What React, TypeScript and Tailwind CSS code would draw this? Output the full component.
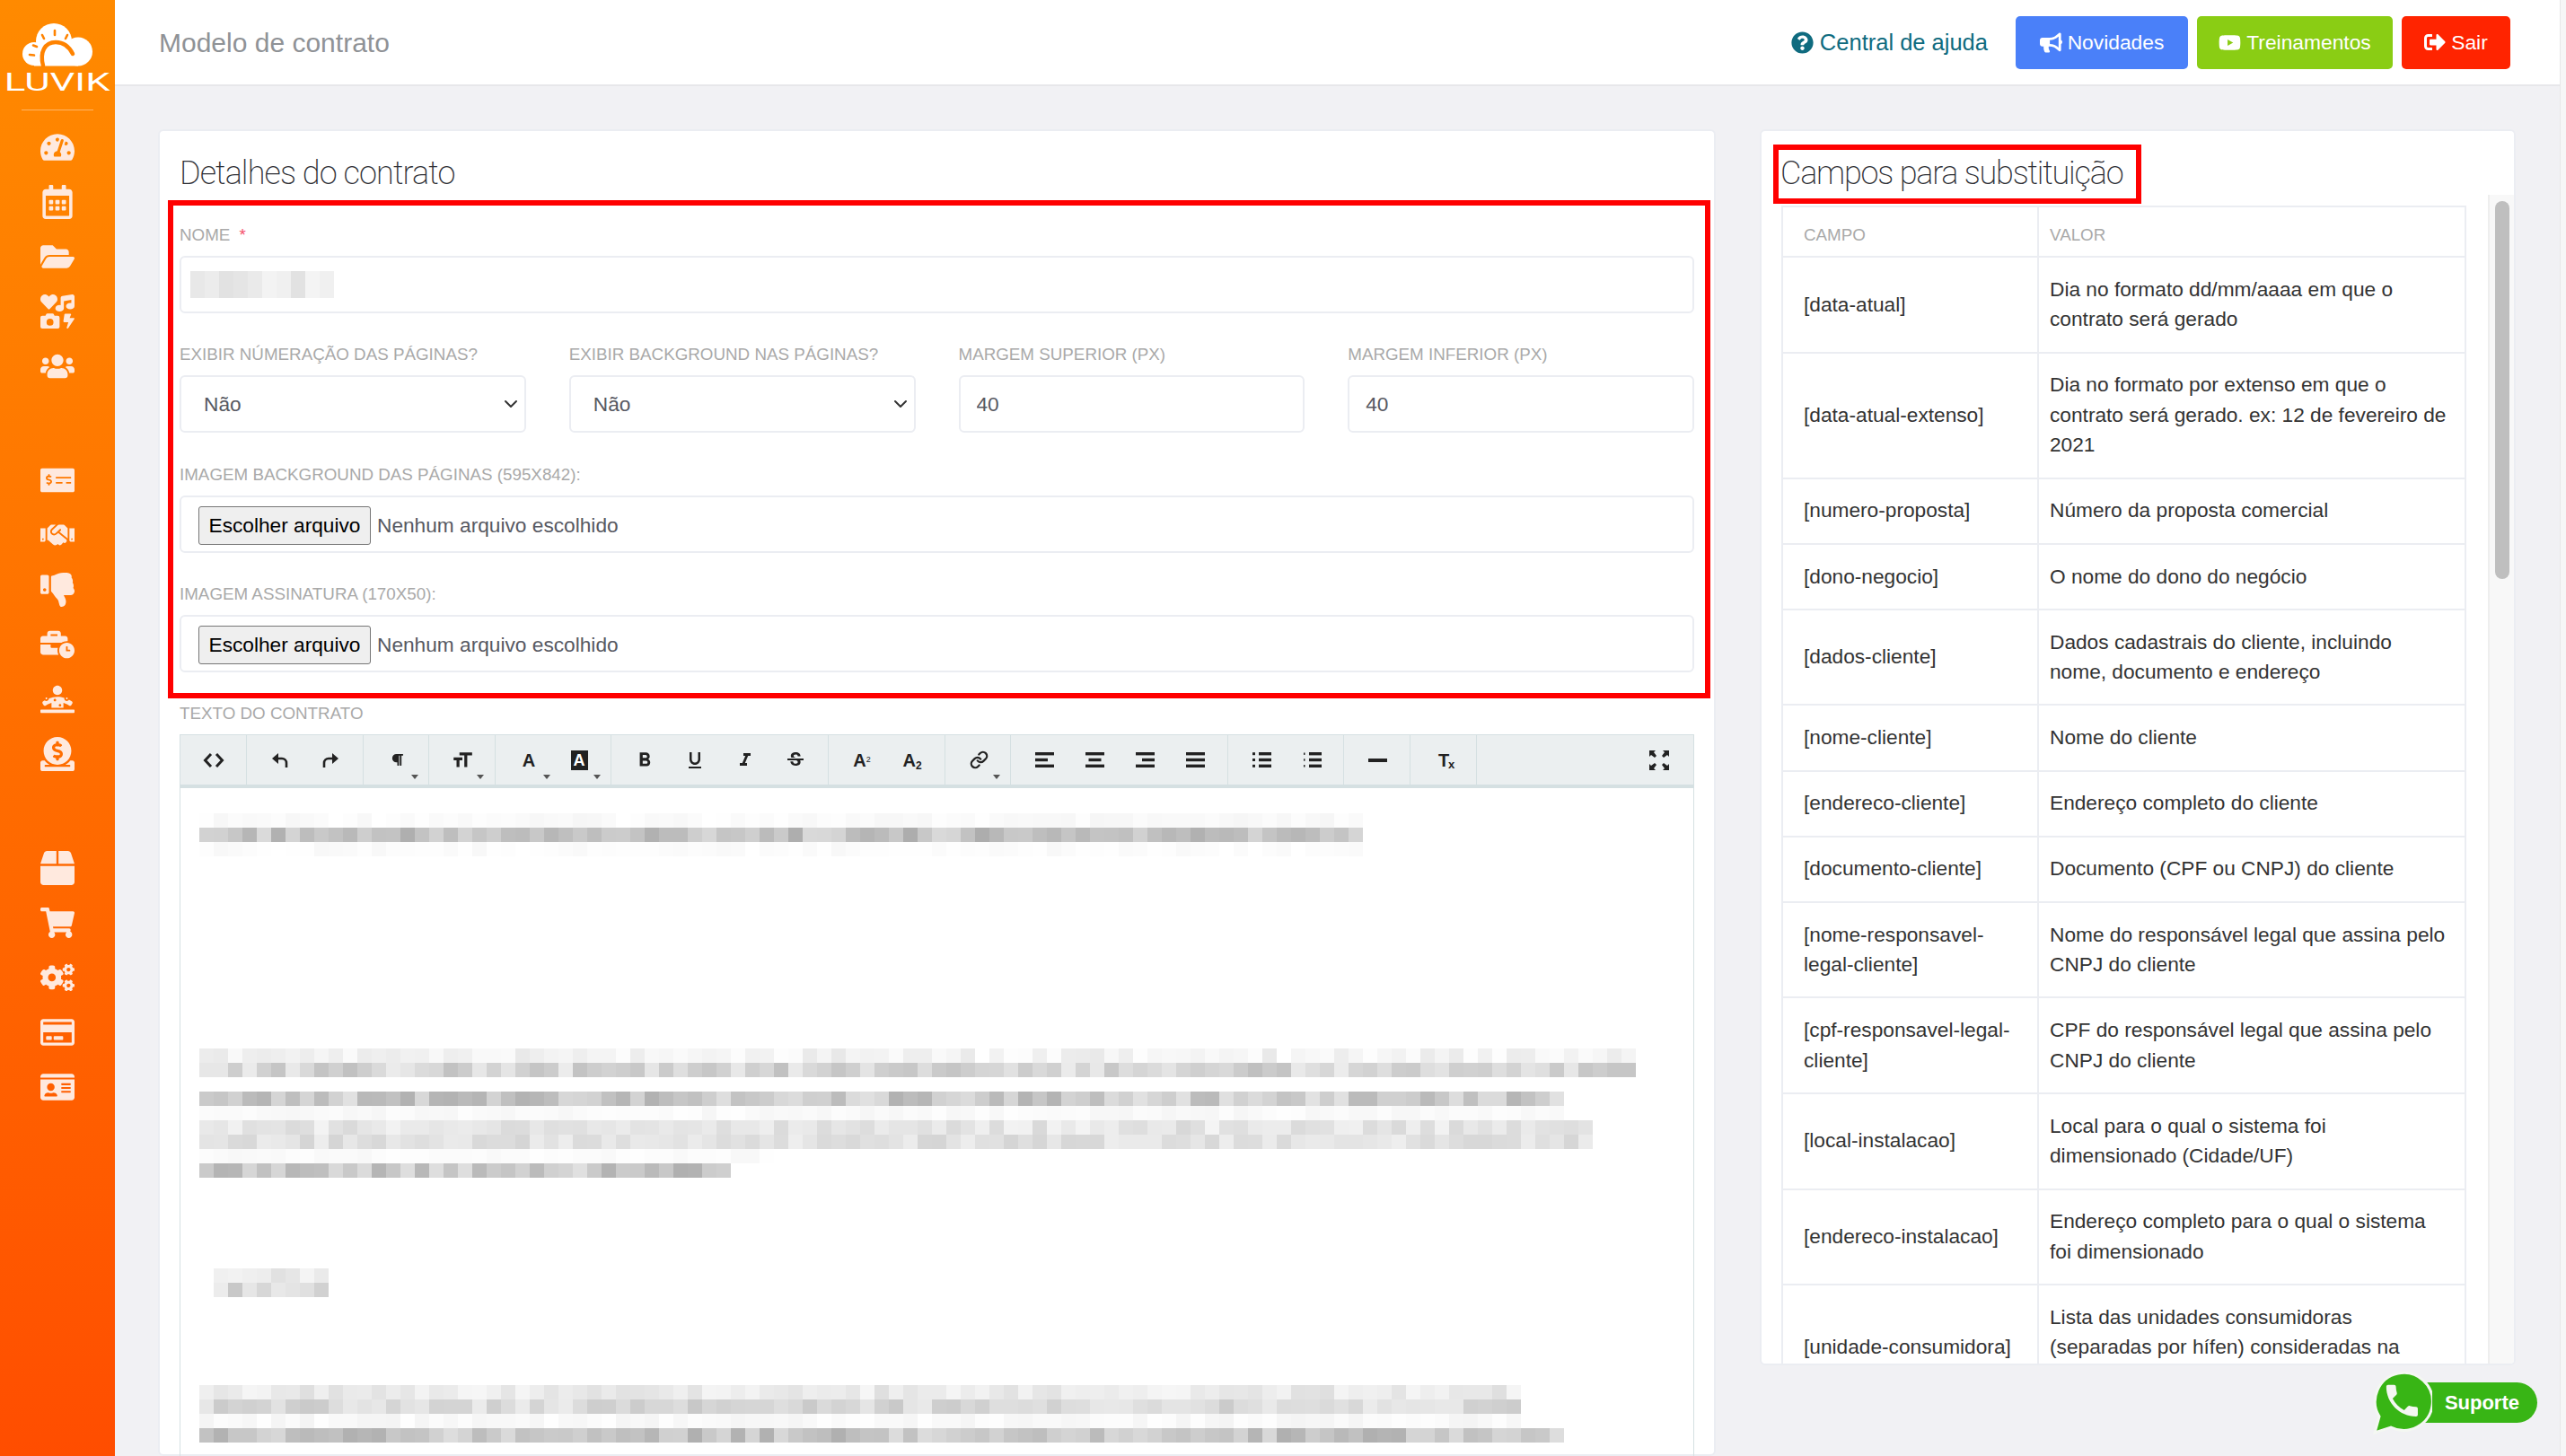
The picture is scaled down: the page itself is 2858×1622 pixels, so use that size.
import { ChevronDown, Link as LinkIcon } from 'lucide-react'
import {
  FaTachometerAlt, FaRegCalendarAlt, FaFolderOpen, FaIcons, FaUsers, FaMoneyCheckAlt, FaHandshake, FaThumbsDown,
  FaBusinessTime, FaDiagnoses, FaDonate, FaBox, FaShoppingCart, FaCogs, FaRegCreditCard, FaIdCard,
  FaQuestionCircle, FaBullhorn, FaYoutube, FaSignOutAlt, FaParagraph,
} from 'react-icons/fa'
import { MdFormatSize, MdFormatBold, MdFormatUnderlined, MdFormatItalic, MdStrikethroughS } from 'react-icons/md'

const sideGroups = [
  [FaTachometerAlt, FaRegCalendarAlt, FaFolderOpen, FaIcons, FaUsers],
  [FaMoneyCheckAlt, FaHandshake, FaThumbsDown, FaBusinessTime, FaDiagnoses, FaDonate],
  [FaBox, FaShoppingCart, FaCogs, FaRegCreditCard, FaIdCard],
]

const campos = [
  { campo: '[data-atual]', valor: 'Dia no formato dd/mm/aaaa em que o contrato será gerado' },
  { campo: '[data-atual-extenso]', valor: 'Dia no formato por extenso em que o contrato será gerado. ex: 12 de fevereiro de 2021' },
  { campo: '[numero-proposta]', valor: 'Número da proposta comercial' },
  { campo: '[dono-negocio]', valor: 'O nome do dono do negócio' },
  { campo: '[dados-cliente]', valor: 'Dados cadastrais do cliente, incluindo nome, documento e endereço' },
  { campo: '[nome-cliente]', valor: 'Nome do cliente' },
  { campo: '[endereco-cliente]', valor: 'Endereço completo do cliente' },
  { campo: '[documento-cliente]', valor: 'Documento (CPF ou CNPJ) do cliente' },
  { campo: '[nome-responsavel-legal-cliente]', valor: 'Nome do responsável legal que assina pelo CNPJ do cliente' },
  { campo: '[cpf-responsavel-legal-cliente]', valor: 'CPF do responsável legal que assina pelo CNPJ do cliente' },
  { campo: '[local-instalacao]', valor: 'Local para o qual o sistema foi dimensionado (Cidade/UF)' },
  { campo: '[endereco-instalacao]', valor: 'Endereço completo para o qual o sistema foi dimensionado' },
  { campo: '[unidade-consumidora]', valor: 'Lista das unidades consumidoras (separadas por hífen) consideradas na proposta' },
]

// blurred contract text: [cols, darkest grey, lightest grey]
const mosaic = [
  { mt: 28, offset: 0, rows: [[81, 246, 255], [81, 172, 218], [81, 248, 255]] },
  { mt: 214, offset: 0, rows: [[100, 232, 255], [100, 192, 236], [0, 255, 255], [95, 178, 226], [95, 246, 254], [97, 216, 244], [97, 212, 240], [40, 248, 254], [37, 176, 224]] },
  { mt: 101, offset: 1, rows: [[8, 224, 244], [8, 200, 236]] },
  { mt: 98, offset: 0, rows: [[92, 222, 246], [92, 200, 236], [92, 244, 254], [95, 176, 222]] },
]

function grey(seed: number, lo: number, hi: number) {
  const x = Math.sin(seed * 12.9898) * 43758.5453
  const v = Math.round(lo + (x - Math.floor(x)) * (hi - lo))
  return `rgb(${v},${v},${v})`
}

function Mosaic() {
  return (
    <div className="pl-[21px]">
      {mosaic.map((block, b) => (
        <div key={b} style={{ marginTop: block.mt, paddingLeft: block.offset * 16 }}>
          {block.rows.map(([cols, lo, hi], r) => (
            <div key={r} className="flex h-[16px]">
              {Array.from({ length: cols }).map((_, c) => (
                <div key={c} className="w-[16px] h-[16px]" style={{ background: grey(b * 1000 + r * 211 + c + 1, lo, hi) }} />
              ))}
            </div>
          ))}
        </div>
      ))}
    </div>
  )
}

function Logo() {
  return (
    <div className="h-[123px] relative flex flex-col items-center pt-[10px]">
      <svg width="128" height="70" viewBox="0 0 128 70" className="shrink-0">
        <circle cx="60" cy="36" r="20" fill="#fff" />
        <circle cx="38" cy="50" r="13" fill="#fff" />
        <circle cx="87" cy="47.500" r="16" fill="#fff" />
        <rect x="38" y="44" width="49" height="19.500" fill="#fff" />
        <path d="M48 63C44 48 50 37 62 37c8 0 15 5 19 13" fill="none" stroke="#ff8300" strokeWidth="4.500" strokeLinecap="round" />
        <g stroke="#ff8300" strokeWidth="2.600" strokeLinecap="round">
          <path d="M37 40.500l4 1.500" />
          <path d="M47 29l2 4" />
          <path d="M61 24v5" />
          <path d="M75 29l-2 4" />
          <path d="M33 51l5 .5" />
        </g>
      </svg>
      <div className="mt-[1px] text-white font-normal text-[28px] leading-[22px] scale-x-[1.56] font-['Roboto',sans-serif]">LUVIK</div>
      <div className="absolute left-[24px] right-[24px] bottom-0 h-px bg-white/40" />
    </div>
  )
}

function Sidebar() {
  return (
    <div className="w-[128px] shrink-0 h-full bg-gradient-to-b from-[#ff8a00] to-[#ff4d00]">
      <Logo />
      <div className="pt-[10px] flex flex-col gap-[66px]">
        {sideGroups.map((group, g) => (
          <div key={g}>
            {group.map((Icon, i) => (
              <div key={i} className="h-[61px] flex items-center justify-center text-[#ffe9de]">
                <Icon size={38} />
              </div>
            ))}
          </div>
        ))}
      </div>
    </div>
  )
}

function Header() {
  const btn = 'h-[59px] rounded-[5px] flex items-center justify-center gap-[6px] text-white text-[22.800px]'
  return (
    <div className="h-[96px] shrink-0 bg-white border-b-2 border-[#e7e7ea] flex items-center pl-[49px] pr-[55px]">
      <div className="text-[30px] text-[#8f9296]">Modelo de contrato</div>
      <div className="ml-auto flex items-center">
        <FaQuestionCircle size={25} className="text-[#0f6b7f]" />
        <span className="ml-[7px] text-[25.500px] text-[#0f6b7f] mr-[31px]">Central de ajuda</span>
        <div className={`${btn} w-[192px] bg-[#4a80f9]`}><FaBullhorn size={25} />Novidades</div>
        <div className={`${btn} w-[218px] ml-[10px] bg-[#8acd14]`}><FaYoutube size={25} />Treinamentos</div>
        <div className={`${btn} w-[121px] ml-[10px] bg-[#ff2400]`}><FaSignOutAlt size={24} />Sair</div>
      </div>
    </div>
  )
}

function Label({ children }: { children: React.ReactNode }) {
  return <div className="text-[18.800px] leading-[24px] text-[#a9a9a9] uppercase whitespace-nowrap">{children}</div>
}

const fieldClass = 'w-full h-[64px] border-2 border-[#ebedf2] rounded-[6px] bg-white text-[22.700px] text-[#575962] outline-none'
const headingClass = "h-[81px] pt-[25px] text-[36px] leading-[44px] font-extralight text-[#2f3036] font-['Roboto',sans-serif]"

function SelectField({ label }: { label: string }) {
  return (
    <div className="min-w-0">
      <Label>{label}</Label>
      <div className="relative mt-[11px]">
        <select className={`${fieldClass} appearance-none pl-[25px]`} defaultValue="nao">
          <option value="nao">Não</option>
          <option value="sim">Sim</option>
        </select>
        <ChevronDown size={24} strokeWidth={2} className="absolute right-[5px] top-[20px] text-[#333]" />
      </div>
    </div>
  )
}

function TextField({ label, value }: { label: string; value: string }) {
  return (
    <div className="min-w-0">
      <Label>{label}</Label>
      <input className={`${fieldClass} mt-[11px] pl-[18px]`} defaultValue={value} readOnly />
    </div>
  )
}

function FileField({ label }: { label: string }) {
  return (
    <div>
      <Label>{label}</Label>
      <div className={`${fieldClass} mt-[11px] flex items-center pl-[19px] pt-[3px] text-[#333]`}>
        <button className="h-[43px] w-[192px] bg-[#efefef] border border-[#767676] rounded-[3px] text-[22.700px] text-black">Escolher arquivo</button>
        <span className="ml-[7px]">Nenhum arquivo escolhido</span>
      </div>
    </div>
  )
}

function Caret() {
  return <span className="absolute right-[4px] bottom-[6px] w-0 h-0 border-l-[4px] border-r-[4px] border-t-[5px] border-l-transparent border-r-transparent border-t-[#555]" />
}

function Tool({ children, caret }: { children: React.ReactNode; caret?: boolean }) {
  return (
    <div className="relative w-[56px] h-full flex items-center justify-center text-[#222]">
      {children}
      {caret && <Caret />}
    </div>
  )
}

function Group({ children, narrow }: { children: React.ReactNode; narrow?: boolean }) {
  return <div className={`h-full flex pl-[9px] border-r border-[#d5e0e2] ${narrow ? 'pr-[7px]' : 'pr-[8px]'}`}>{children}</div>
}

function AlignIcon({ mid, w }: { mid: number; w: number }) {
  return (
    <svg width="21" height="17" viewBox="0 0 21 17" fill="#222">
      <rect width="21" height="3.400" />
      <rect x={mid} y="6.800" width={w} height="3.400" />
      <rect y="13.600" width="21" height="3.400" />
    </svg>
  )
}

function ListIcon({ small }: { small?: boolean }) {
  const s = small ? 1.5 : 3
  return (
    <svg width="21" height="17" viewBox="0 0 21 17" fill="#222">
      {[0, 6.8, 13.6].map((y) => (
        <g key={y}>
          <rect x={small ? 1 : 0} y={y + (small ? 0.5 : 0.2)} width={s} height={small ? 2.4 : 3} />
          <rect x="7" y={y} width="14" height="3.400" />
        </g>
      ))}
    </svg>
  )
}

function Toolbar() {
  const letter = "font-['Liberation_Sans',sans-serif] font-bold text-[#222]"
  return (
    <div className="h-[60px] bg-[#ebeff0] border border-[#d5e0e2] border-b-[4px] flex items-stretch">
      <Group>
        <Tool>
          <svg width="24" height="20" viewBox="0 0 24 20" fill="none" stroke="#222" strokeWidth="3"><path d="M9 3L2.500 10L9 17" /><path d="M15 3l6.500 7L15 17" /></svg>
        </Tool>
      </Group>
      <Group>
        <Tool>
          <svg width="20" height="18" viewBox="0 0 20 18"><path d="M8 1L1 7l7 6z" fill="#222" /><path d="M6 7h6a5 5 0 0 1 5 5v5" fill="none" stroke="#222" strokeWidth="2.600" /></svg>
        </Tool>
        <Tool>
          <svg width="20" height="18" viewBox="0 0 20 18"><path d="M12 1l7 6-7 6z" fill="#222" /><path d="M14 7H8a5 5 0 0 0-5 5v5" fill="none" stroke="#222" strokeWidth="2.600" /></svg>
        </Tool>
      </Group>
      <Group narrow><Tool caret><FaParagraph size={15} /></Tool></Group>
      <Group><Tool caret><MdFormatSize size={26} /></Tool></Group>
      <Group narrow>
        <Tool caret><span className={`${letter} text-[20px]`}>A</span></Tool>
        <Tool caret><span className={`${letter} text-[18px] leading-[22px] bg-[#222] !text-white px-[3px]`}>A</span></Tool>
      </Group>
      <Group>
        <Tool><MdFormatBold size={26} /></Tool>
        <Tool><MdFormatUnderlined size={24} /></Tool>
        <Tool><MdFormatItalic size={24} /></Tool>
        <Tool><MdStrikethroughS size={24} /></Tool>
      </Group>
      <Group>
        <Tool><span className={`${letter} text-[20px]`}>A<sup className="text-[9px] font-normal">2</sup></span></Tool>
        <Tool><span className={`${letter} text-[20px]`}>A<sub className="text-[12px]">2</sub></span></Tool>
      </Group>
      <Group narrow><Tool caret><LinkIcon size={21} strokeWidth={2.6} /></Tool></Group>
      <Group>
        <Tool><AlignIcon mid={0} w={14} /></Tool>
        <Tool><AlignIcon mid={3.5} w={14} /></Tool>
        <Tool><AlignIcon mid={7} w={14} /></Tool>
        <Tool><AlignIcon mid={0} w={21} /></Tool>
      </Group>
      <Group narrow>
        <Tool><ListIcon /></Tool>
        <Tool><ListIcon small /></Tool>
      </Group>
      <Group><Tool><div className="w-[21px] h-[4px] bg-[#222]" /></Tool></Group>
      <Group>
        <Tool>
          <span className={`${letter} text-[20px] relative`}>T<span className="text-[13px] absolute left-[11px] top-[10px]">x</span></span>
        </Tool>
      </Group>
      <div className="ml-auto w-[76px] flex items-center justify-center">
        <svg width="22" height="22" viewBox="0 0 22 22" fill="#222">
          <path d="M0 0h7L5 2l3 4-2 2-4-3-2 2z" />
          <path d="M22 0h-7l2 2-3 4 2 2 4-3 2 2z" />
          <path d="M0 22h7l-2-2 3-4-2-2-4 3-2-2z" />
          <path d="M22 22h-7l2-2-3-4 2-2 4 3 2-2z" />
        </svg>
      </div>
    </div>
  )
}

function DetailsCard() {
  return (
    <div className="relative w-[1735px] h-[1478px] shrink-0 bg-white border-2 border-[#ebedf2] rounded-[6px] px-[22px]">
      <div className={`${headingClass} tracking-[-0.9px]`}>Detalhes do contrato</div>
      <div className="pt-[23px]">
        <Label>Nome <span className="text-[#f4516c] ml-[5px]">*</span></Label>
        <div className={`${fieldClass} mt-[11px] flex items-center pl-[10px]`}>
          <div className="grid grid-cols-[repeat(10,16px)] grid-rows-[repeat(2,15px)]">
            {Array.from({ length: 20 }).map((_, i) => (
              <div key={i} style={{ background: grey((i % 10) + 5, 222, 244) }} />
            ))}
          </div>
        </div>
      </div>
      <div className="grid grid-cols-4 gap-x-[48px] mt-[34px]">
        <SelectField label="Exibir númeração das páginas?" />
        <SelectField label="Exibir background nas páginas?" />
        <TextField label="Margem superior (px)" value="40" />
        <TextField label="Margem inferior (px)" value="40" />
      </div>
      <div className="mt-[35px]"><FileField label="Imagem background das páginas (595x842):" /></div>
      <div className="mt-[34px]"><FileField label="Imagem assinatura (170x50):" /></div>
      <div className="mt-[34px]">
        <Label>Texto do contrato</Label>
        <div className="mt-[11px]">
          <Toolbar />
          <div className="h-[800px] border-x border-[#d5e0e2] overflow-hidden">
            <Mosaic />
          </div>
        </div>
      </div>
      <div className="absolute left-[9px] top-[77px] w-[1718px] h-[555px] border-[6px] border-[#ff0000] pointer-events-none" />
    </div>
  )
}

function CamposCard() {
  return (
    <div className="relative w-[842px] h-[1377px] shrink-0 bg-white border-2 border-[#ebedf2] rounded-[6px] overflow-hidden">
      <div className={`${headingClass} h-[83px] pl-[21px] tracking-[-1.2px]`}>Campos para substituição</div>
      <div className="absolute right-0 top-[71px] bottom-0 w-[29px] bg-[#f8f8f8] border-l-2 border-[#eeeeee]">
        <div className="absolute left-[6px] top-[7px] w-[16px] h-[421px] rounded-full bg-[#bfbfbf]" />
      </div>
      <table className="ml-[22px] w-[763px] table-fixed border-collapse text-[22.700px] leading-[33.500px] text-[#333]">
        <colgroup>
          <col className="w-[285px]" />
          <col />
        </colgroup>
        <thead>
          <tr className="h-[56px] text-[18.800px] text-[#a9a9a9] text-left">
            <th className="font-normal border-2 border-[#ebedf2] pl-[23px] pt-[8px]">CAMPO</th>
            <th className="font-normal border-2 border-[#ebedf2] pl-[12px] pt-[8px]">VALOR</th>
          </tr>
        </thead>
        <tbody>
          {campos.map((row) => (
            <tr key={row.campo}>
              <td className="border-2 border-[#ebedf2] pl-[23px] pr-[14px] py-[18.800px] break-words">{row.campo}</td>
              <td className="border-2 border-[#ebedf2] pl-[12px] pr-[14px] py-[18.800px]">{row.valor}</td>
            </tr>
          ))}
        </tbody>
      </table>
    </div>
  )
}

function Suporte() {
  return (
    <div className="absolute left-[2641px] top-[1528px] w-[187px] h-[70px]">
      <div className="absolute left-[20px] top-[12px] right-[2px] h-[45px] rounded-full bg-[#38b515] flex items-center justify-end pr-[20px]">
        <span className="text-white text-[22px] font-bold">Suporte</span>
      </div>
      <svg className="absolute left-0 top-0" width="68" height="70" viewBox="0 0 68 70">
        <path d="M4 68l5-18A32 32 0 1 1 22 62z" fill="#38b515" stroke="#f4f7f2" strokeWidth="3" />
        <g transform="translate(11 9) scale(1.95)">
          <path fill="#f4f7f2" d="M6.620 10.790c1.440 2.830 3.760 5.140 6.590 6.590l2.200-2.200c.27-.27.67-.36 1.020-.24 1.120.37 2.330.57 3.570.57.55 0 1 .45 1 1V20c0 .55-.45 1-1 1-9.390 0-17-7.610-17-17 0-.55.45-1 1-1h3.500c.55 0 1 .45 1 1 0 1.250.2 2.450.57 3.570.11.35.03.74-.25 1.020l-2.200 2.200z" />
        </g>
      </svg>
    </div>
  )
}

export default function App() {
  return (
    <div className="relative w-[2858px] h-[1622px] overflow-hidden flex bg-[#f1f1f4] font-['Liberation_Sans',Arial,sans-serif]">
      <Sidebar />
      <div className="flex-1 min-w-0 flex flex-col">
        <Header />
        <div className="flex pt-[48px] pl-[48px] gap-[49px]">
          <DetailsCard />
          <CamposCard />
        </div>
      </div>
      <div className="w-[7px] shrink-0 bg-[#f6f6f6] border-l border-[#e8e8e8]" />
      <div className="absolute left-[1975px] top-[161px] w-[410px] h-[66px] border-[6px] border-[#ff0000] pointer-events-none" />
      <Suporte />
    </div>
  )
}
